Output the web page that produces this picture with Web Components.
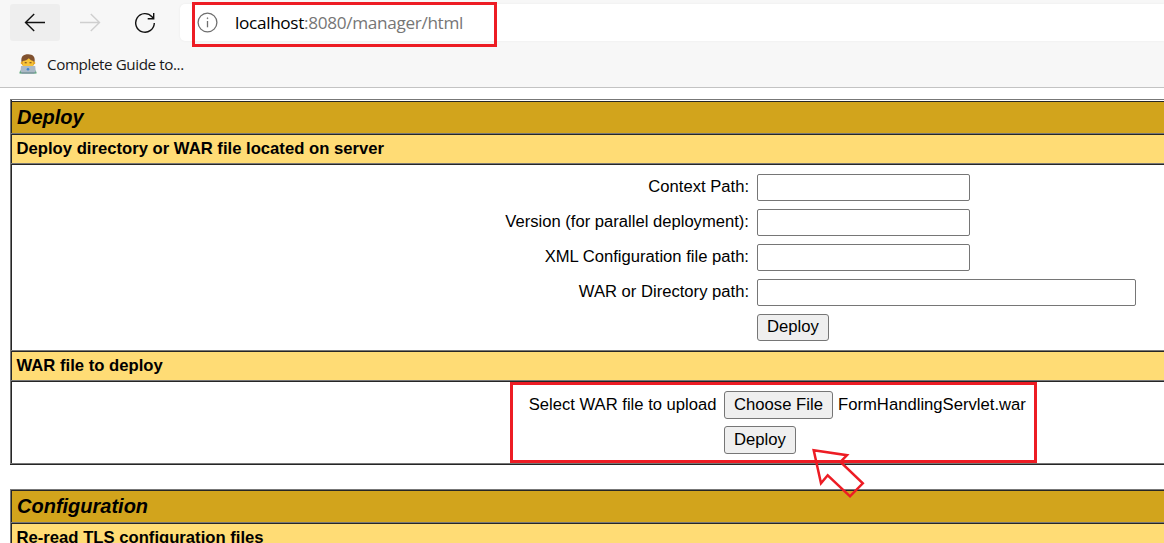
<!DOCTYPE html>
<html lang="en">
<head>
<meta charset="utf-8">
<title>Tomcat Manager</title>
<style>
html,body{margin:0;padding:0;background:#fff;overflow:hidden}
body{width:1164px;height:543px;font-family:"Liberation Sans",Arial,sans-serif;color:#000}
</style>
</head>
<body>
<manager-page></manager-page>
<script>
const define = (name, html) => customElements.define(name, class extends HTMLElement {
  constructor() {
    super();
    this.attachShadow({mode: 'open'}).innerHTML = html;
  }
});

define('nav-button', `<style>
:host{display:flex;align-items:center;justify-content:center;width:50px;height:37px;border-radius:3px;background:var(--bg,transparent);color:var(--ink,#111)}
</style><slot></slot>`);

define('address-bar', `<style>
:host{display:flex;align-items:center;flex:1;height:37px;margin-left:10px;padding-left:17px;background:#fff;border-radius:5px 0 0 5px;box-shadow:0 0 2px #e8e8e8;font:17.2px/37px "Open Sans","Noto Sans",sans-serif;color:#767676;white-space:nowrap}
svg{margin-right:17px;flex:none}
.url{letter-spacing:-.33px}
b{font-weight:400;color:#000}
</style><svg width="21" height="21" viewBox="0 0 21 21" fill="none" stroke="#6f6f6f" stroke-width="1.3"><circle cx="10.5" cy="10.5" r="9.4"/><path d="M10.5 9v6.3"/><circle cx="10.5" cy="6.2" r=".5" fill="#6f6f6f" stroke-width=".7"/></svg><span class="url"><b>localhost</b>:8080/manager/html</span>`);

define('bookmark-link', `<style>
:host{display:flex;align-items:center;height:46px;padding-left:19px;font:15.2px/46px "Open Sans","Noto Sans",sans-serif;color:#1a1a1a;white-space:nowrap}
svg{margin-right:10px}
span{letter-spacing:-.4px}
</style><svg width="18" height="20" viewBox="0 0 18 20">
<path d="M2.5 8C1.500 2.500 4.500.3 9.200.3S16.500 3 15.500 8l-1 3H3.500z" fill="#80512f"/>
<path d="M3.500 7C6 7 8.500 5.700 9.800 4.300 11 6 13 6.700 14.500 7V12c0 3-2.500 4-5.500 4s-5.500-1-5.500-4z" fill="#f8c336"/>
<circle cx="2.900" cy="9" r="1.200" fill="#eaa927"/><circle cx="15.100" cy="9" r="1.200" fill="#eaa927"/>
<path d="M5.700 8.800h2M10.500 8.800h2" stroke="#6b431f" stroke-width="1.100"/>
<path d="M.5 19.500c0-2 .8-3.500 2.500-3.500h12c1.700 0 2.500 1.500 2.500 3.500z" fill="#3f9b60"/>
<path d="M2 12h14.200l.6 6.500H1.400z" fill="#abb9c6"/><path d="M2.500 18.200h13v1.500h-13z" fill="#8799a8"/>
<circle cx="9" cy="15.200" r="1.300" fill="#3b85d0"/></svg><span><slot></slot></span>`);

define('browser-chrome', `<style>
:host{display:block;height:87px;background:#f7f7f7;border-bottom:1px solid #c3c3c3}
.bar{display:flex;padding:4px 0 0 10px}
</style><div class="bar">
<nav-button style="--bg:#eee"><svg width="22" height="20" viewBox="0 0 22 20" fill="none" stroke="currentColor" stroke-width="1.400"><path d="M21 9.500H1.500M10.200 1L1.500 9.500l8.700 8.500"/></svg></nav-button>
<nav-button style="--ink:#cfcfcf;margin-left:5px"><svg width="22" height="20" viewBox="0 0 22 20" fill="none" stroke="currentColor" stroke-width="1.400"><path d="M1 9.500h19.500M11.800 1l8.700 8.500-8.700 8.500"/></svg></nav-button>
<nav-button style="margin-left:5px"><svg width="22" height="22" viewBox="0 0 22 22" fill="none" stroke="currentColor" stroke-width="1.400"><path d="M20.300 11a9.300 9.300 0 1 1-2.300-6.200L19.500 6.500M19.700 1v5.700h-6"/></svg></nav-button>
<address-bar></address-bar></div>
<bookmark-link>Complete Guide to...</bookmark-link>`);

define('panel-title', `<style>
:host{display:block;box-sizing:border-box;height:33px;border-top:1px solid #777;border-left:1px solid #777;background:#d2a41c;box-shadow:inset 1px 1px #262626;padding:1px 0 0 6px;font:italic bold 20px/31px "Liberation Sans",Arial,sans-serif}
:host([gap]){height:34px;padding-top:2px;background:linear-gradient(#fff 1px,#262626 1px 2px,#d2a41c 2px);box-shadow:inset 1px 0 #262626}
</style><slot></slot>`);

define('panel-subtitle', `<style>
:host{display:block;box-sizing:border-box;height:30px;border-top:1px solid #777;border-left:1px solid #777;background:#ffdc75;box-shadow:inset 1px 1px #262626;padding:1px 0 0 5.500px;font:bold 16.67px/27px "Liberation Sans",Arial,sans-serif;white-space:nowrap}
</style><slot></slot>`);

define('panel-body', `<style>
:host{display:block;box-sizing:border-box;border-top:1px solid #777;border-left:1px solid #777;box-shadow:inset 1px 1px #262626;font-size:16.62px}
</style><slot></slot>`);

define('form-row', `<style>
:host{display:grid;grid-template-columns:var(--label) 1fr;column-gap:8px;height:35px;align-items:start}
label{text-align:right;line-height:var(--line,25px);white-space:nowrap}
.field{display:flex}
</style><label><slot name="label"></slot></label><div class="field"><slot></slot></div>`);

define('text-field', `<style>
:host{display:block}
input{display:block;box-sizing:border-box;width:var(--w,213px);height:27px;margin:0;border:1px solid #767676;border-radius:2px;background:#fff;outline:0}
</style><input type="text">`);

define('push-button', `<style>
:host{display:block}
button{display:block;box-sizing:border-box;width:var(--w,72px);height:var(--h,27px);margin:0;padding:0 0 2px;border:1px solid #767676;border-radius:3px;background:#efefef;color:#000;font:16.67px/23px "Liberation Sans",Arial,sans-serif;white-space:nowrap}
</style><button type="button"><slot></slot></button>`);

define('highlight-box', `<style>
:host{display:block;position:absolute;box-sizing:border-box;border:3px solid #ed1c24;pointer-events:none}
</style>`);

define('pointer-arrow', `<style>
:host{display:block;position:absolute;left:808px;top:445px;width:60px;height:56px;pointer-events:none}
svg{display:block}
</style><svg width="60" height="56" viewBox="808 445 60 56" fill="none" stroke="#ed1c24" stroke-width="2.500"><path d="M813.700 450.200L847 455.200 840.500 462 862.800 483.300 850 496.300 827.700 475.300 821 483.300z"/></svg>`);

define('manager-page', `<style>
:host{display:block;position:relative;width:1164px;height:543px;overflow:hidden;background:#fff}
main{padding:11px 0 0 10px}
section{border-bottom:1px solid #262626;margin-bottom:24px}
.end{height:1px;background:#777}
.server{height:187px;padding:10px 0 0 1px;--label:737px}
.upload{height:83px;padding:10px 0 0 1px;--label:704.500px;--line:27px}
.upload form-row{column-gap:7.500px}
.file{margin-left:5px;line-height:27px;font-size:16.67px}
</style>
<browser-chrome></browser-chrome>
<main>
<section>
<panel-title gap>Deploy</panel-title>
<panel-subtitle>Deploy directory or WAR file located on server</panel-subtitle>
<panel-body class="server">
<form-row><span slot="label">Context Path:</span><text-field></text-field></form-row>
<form-row><span slot="label">Version (for parallel deployment):</span><text-field></text-field></form-row>
<form-row><span slot="label">XML Configuration file path:</span><text-field></text-field></form-row>
<form-row><span slot="label">WAR or Directory path:</span><text-field style="--w:379px"></text-field></form-row>
<form-row><push-button>Deploy</push-button></form-row>
</panel-body>
<panel-subtitle>WAR file to deploy</panel-subtitle>
<panel-body class="upload">
<form-row><span slot="label">Select WAR file to upload</span><push-button style="--w:109px;--h:28px">Choose File</push-button><span class="file">FormHandlingServlet.war</span></form-row>
<form-row><push-button style="--h:28px">Deploy</push-button></form-row>
</panel-body>
<div class="end"></div>
</section>
<section>
<panel-title>Configuration</panel-title>
<panel-subtitle>Re-read TLS configuration files</panel-subtitle>
</section>
</main>
<highlight-box style="left:192px;top:2px;width:305px;height:45px"></highlight-box>
<highlight-box style="left:510px;top:382px;width:527px;height:81px"></highlight-box>
<pointer-arrow></pointer-arrow>`);
</script>
</body>
</html>
